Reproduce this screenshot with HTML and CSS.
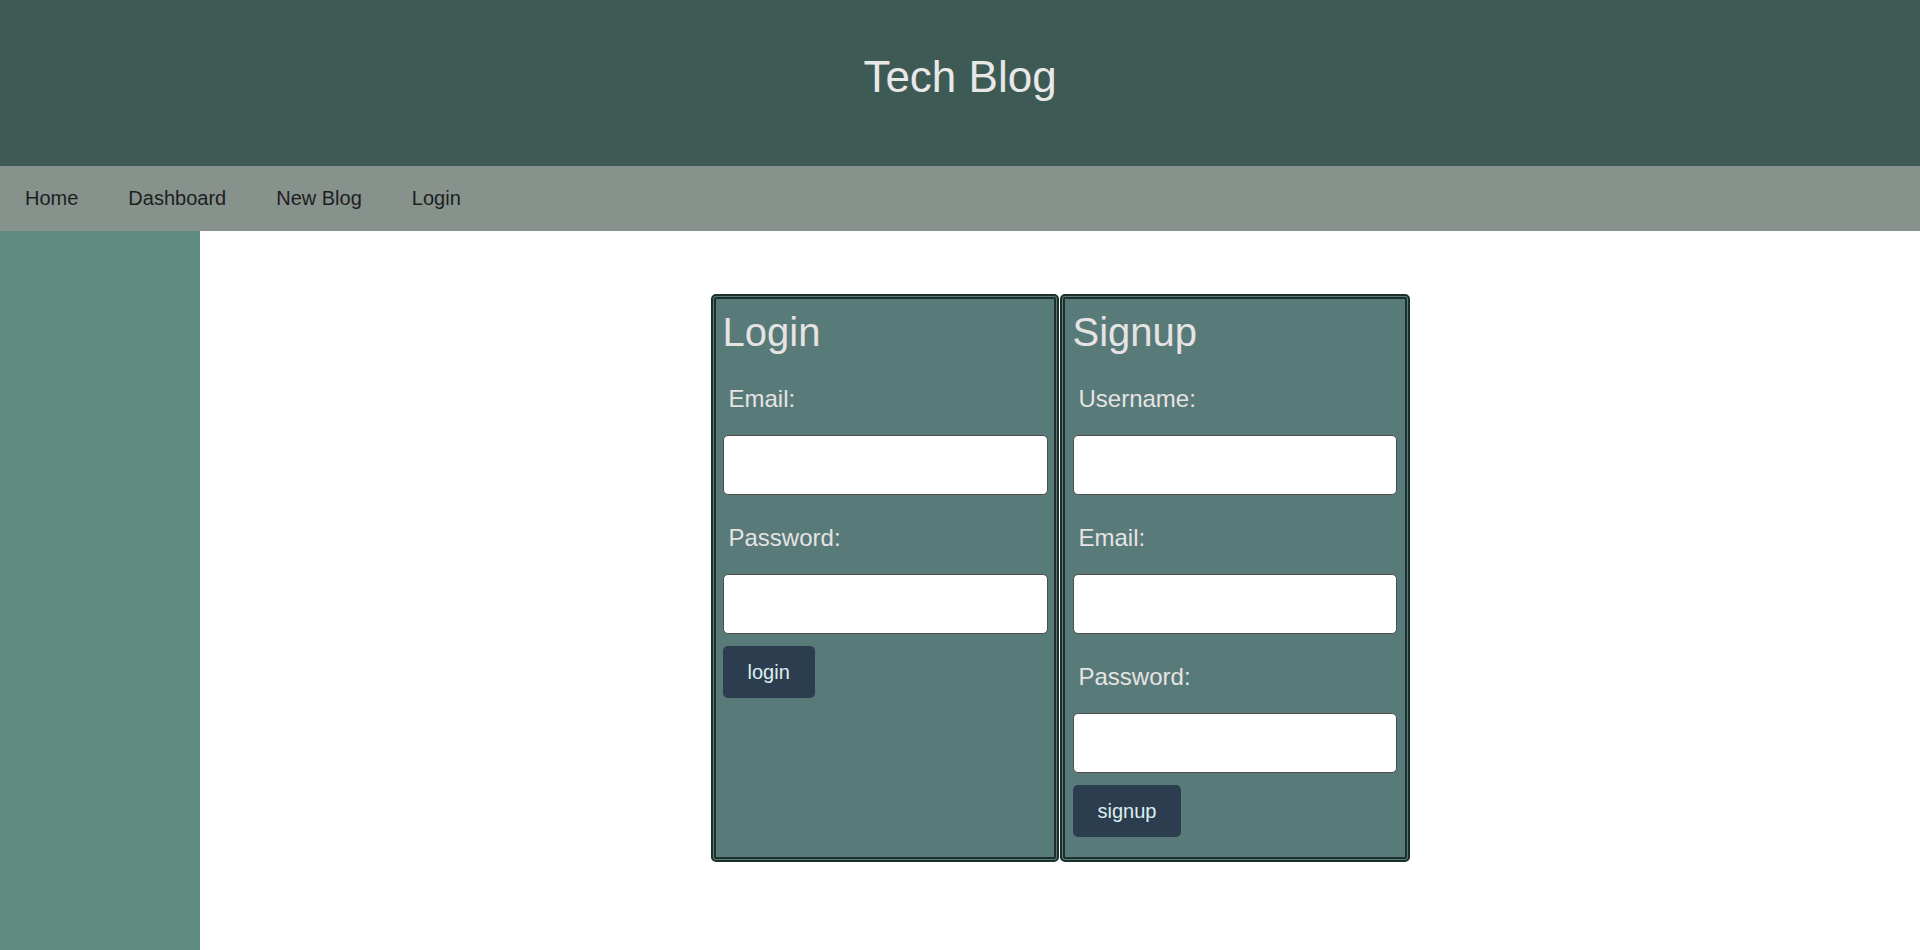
FILE: index.html
```html
<!DOCTYPE html>
<html lang="en">
<head>
<meta charset="utf-8">
<title>Tech Blog</title>
<link rel="stylesheet" href="styles.css">
</head>
<body>
<header class="site-header">
  <h1 class="site-title">Tech Blog</h1>
</header>
<nav class="site-nav">
  <a class="nav-link" href="#">Home</a>
  <a class="nav-link" href="#">Dashboard</a>
  <a class="nav-link" href="#">New Blog</a>
  <a class="nav-link" href="#">Login</a>
</nav>
<div class="layout">
  <aside class="sidebar"></aside>
  <main class="content">
    <div class="forms">
      <form class="card">
        <h2 class="card-title">Login</h2>
        <label class="field-label" for="login-email">Email:</label>
        <input class="field-input" id="login-email" type="text">
        <label class="field-label" for="login-password">Password:</label>
        <input class="field-input" id="login-password" type="password">
        <button class="btn" type="button">login</button>
      </form>
      <form class="card card-wide">
        <h2 class="card-title">Signup</h2>
        <label class="field-label" for="signup-username">Username:</label>
        <input class="field-input" id="signup-username" type="text">
        <label class="field-label" for="signup-email">Email:</label>
        <input class="field-input" id="signup-email" type="text">
        <label class="field-label" for="signup-password">Password:</label>
        <input class="field-input" id="signup-password" type="password">
        <button class="btn" type="button">signup</button>
      </form>
    </div>
  </main>
</div>
</body>
</html>
```

FILE: styles.css
```css
* {
  box-sizing: border-box;
}

body {
  margin: 0;
  font-family: "Liberation Sans", Arial, sans-serif;
  background: #ffffff;
}

.site-header {
  height: 166px;
  background: #3d5a54;
  padding-top: 52px;
  text-align: center;
}

.site-title {
  margin: 0;
  font-size: 44px;
  font-weight: normal;
  line-height: 50px;
  color: #e8e8e8;
}

.site-nav {
  height: 65px;
  background: #87928d;
  display: flex;
  align-items: center;
}

.nav-link {
  padding: 0 25px;
  font-size: 20px;
  color: #1e1e1e;
  text-decoration: none;
}

.layout {
  display: flex;
  min-height: calc(100vh - 231px);
}

.sidebar {
  width: 200px;
  flex-shrink: 0;
  background: #5e8a80;
}

.content {
  flex: 1;
  padding-top: 63px;
  display: flex;
  justify-content: center;
  align-items: flex-start;
}

.forms {
  display: flex;
  gap: 1px;
}

.card {
  width: 348px;
  background: #587a79;
  border: 5px double #1c2f2a;
  border-radius: 5px;
  padding: 10px 6px 20px 7px;
  display: flex;
  flex-direction: column;
  align-items: flex-start;
}

.card-wide {
  width: 350px;
  padding-left: 8px;
  padding-right: 8px;
}

.card-title {
  margin: 0;
  font-size: 40px;
  font-weight: normal;
  line-height: 46px;
  color: #e6e3e3;
}

.field-label {
  display: block;
  margin: 30px 0 22px 6px;
  font-size: 24px;
  line-height: 28px;
  color: #e6e3e3;
}

.field-input + .field-label {
  margin-top: 29px;
}

.field-input {
  width: 100%;
  height: 60px;
  border: 1px solid #4d4d4d;
  border-radius: 5px;
  background: #ffffff;
}

.btn {
  margin-top: 12px;
  height: 52px;
  padding: 0 25px;
  border: none;
  border-radius: 5px;
  background: #2c3d50;
  color: #dcefef;
  font-family: "Liberation Sans", Arial, sans-serif;
  font-size: 20px;
}
```
